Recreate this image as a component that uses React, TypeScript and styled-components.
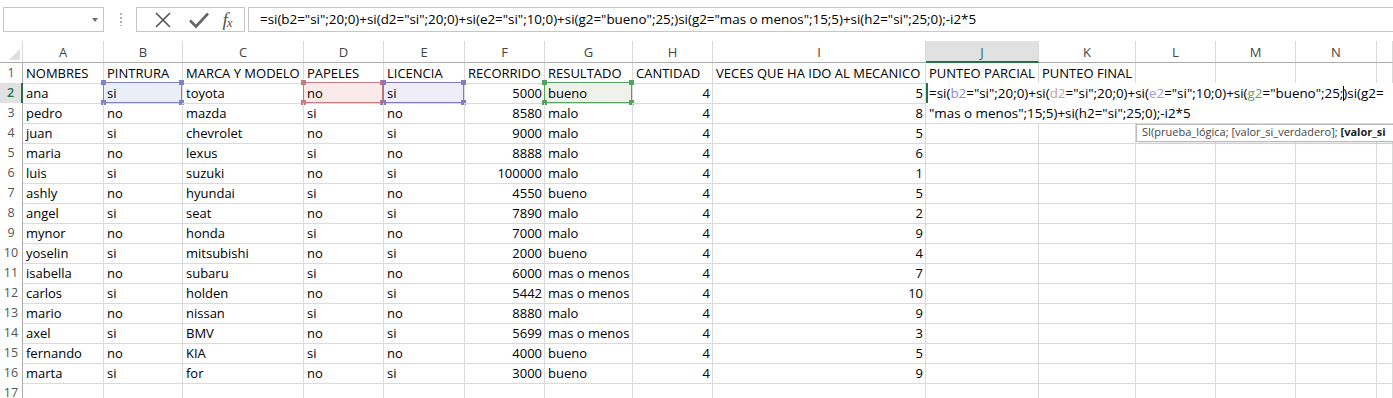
import React from 'react';
import styled, { createGlobalStyle } from 'styled-components';

const GlobalStyle = createGlobalStyle`
  html, body {
    margin: 0;
    padding: 0;
    background: #ffffff;
  }
  body {
    font-family: "Open Sans", "Liberation Sans", sans-serif;
    overflow: hidden;
  }
`;

// Column widths: row header, A..N, then the sliver of O
const COL_WIDTHS = [23, 81, 79, 121, 80, 81, 80, 88, 80, 213, 113, 97, 80, 80, 81];
const COLS = COL_WIDTHS.map(w => `${w}px`).join(' ') + ' 1fr';
const LETTERS = ['A', 'B', 'C', 'D', 'E', 'F', 'G', 'H', 'I', 'J', 'K', 'L', 'M', 'N', ''];
const NUMERIC_COLS = [5, 7, 8]; // F, H, I

const HEADERS = [
  'NOMBRES', 'PINTRURA', 'MARCA Y MODELO', 'PAPELES', 'LICENCIA', 'RECORRIDO',
  'RESULTADO', 'CANTIDAD', 'VECES QUE HA IDO AL MECANICO', 'PUNTEO PARCIAL', 'PUNTEO FINAL',
];

const DATA: (string | number)[][] = [
  ['ana', 'si', 'toyota', 'no', 'si', 5000, 'bueno', 4, 5],
  ['pedro', 'no', 'mazda', 'si', 'no', 8580, 'malo', 4, 8],
  ['juan', 'si', 'chevrolet', 'no', 'si', 9000, 'malo', 4, 5],
  ['maria', 'no', 'lexus', 'si', 'no', 8888, 'malo', 4, 6],
  ['luis', 'si', 'suzuki', 'no', 'si', 100000, 'malo', 4, 1],
  ['ashly', 'no', 'hyundai', 'si', 'no', 4550, 'bueno', 4, 5],
  ['angel', 'si', 'seat', 'no', 'si', 7890, 'malo', 4, 2],
  ['mynor', 'no', 'honda', 'si', 'no', 7000, 'malo', 4, 9],
  ['yoselin', 'si', 'mitsubishi', 'no', 'si', 2000, 'bueno', 4, 4],
  ['isabella', 'no', 'subaru', 'si', 'no', 6000, 'mas o menos', 4, 7],
  ['carlos', 'si', 'holden', 'no', 'si', 5442, 'mas o menos', 4, 10],
  ['mario', 'no', 'nissan', 'si', 'no', 8880, 'malo', 4, 9],
  ['axel', 'si', 'BMV', 'no', 'si', 5699, 'mas o menos', 4, 3],
  ['fernando', 'no', 'KIA', 'si', 'no', 4000, 'bueno', 4, 5],
  ['marta', 'si', 'for', 'no', 'si', 3000, 'bueno', 4, 9],
];

interface RefColor {
  line: string;
  fill: string;
  text: string;
}

const REFS: Record<number, RefColor> = {
  1: { line: '#7d84c6', fill: '#e9eef9', text: '#8a8ccc' },
  3: { line: '#c77b7e', fill: '#fbeaea', text: '#d09a9c' },
  4: { line: '#8779be', fill: '#efedf7', text: '#a49bd0' },
  6: { line: '#56a061', fill: '#eef2ea', text: '#5fa468' },
};

const GREEN = '#217346';
const GRID = '#dadada';

// ---------- Formula bar ----------
const Toolbar = styled.div`
  height: 41px;
  display: flex;
  align-items: flex-start;
  padding-top: 7px;
  box-sizing: border-box;
`;

const NameBox = styled.div`
  margin-left: 3px;
  width: 101px;
  height: 25px;
  border: 1px solid #c6c6c6;
  box-sizing: border-box;
  display: flex;
  justify-content: flex-end;
  align-items: center;
  padding-right: 5px;
`;

const Caret = styled.div`
  width: 0;
  height: 0;
  border-left: 3.5px solid transparent;
  border-right: 3.5px solid transparent;
  border-top: 4px solid #6d6d6d;
`;

const Grip = styled.div`
  margin: 6px 0 0 16px;
  width: 2px;
  height: 13px;
  background: repeating-linear-gradient(to bottom, #b3b3b3 0 2px, transparent 2px 4px);
`;

const ButtonBox = styled.div`
  margin-left: 14px;
  width: 109px;
  height: 25px;
  border: 1px solid #c6c6c6;
  box-sizing: border-box;
  display: flex;
  align-items: center;
  padding-left: 8px;
`;

const IconSlot = styled.div<{ $w: number }>`
  width: ${p => p.$w}px;
  height: 23px;
  display: flex;
  align-items: center;
  justify-content: center;
`;

const Fx = styled.span`
  font-family: "Liberation Serif", "DejaVu Serif", serif;
  font-style: italic;
  font-size: 19px;
  color: #555;
  line-height: 1;
  letter-spacing: -1px;

  sub {
    font-size: 13px;
    vertical-align: -1px;
  }
`;

const FormulaBox = styled.div`
  margin-left: 3px;
  flex: 1;
  height: 25px;
  border: 1px solid #c6c6c6;
  border-right: none;
  box-sizing: border-box;
  padding-left: 11px;
  font-size: 13.4px;
  line-height: 22px;
  color: #000;
  white-space: nowrap;
  overflow: hidden;
`;

// ---------- Sheet ----------
const Sheet = styled.div`
  position: relative;
`;

const Row = styled.div<{ $h: number }>`
  display: grid;
  grid-template-columns: ${COLS};
  height: ${p => p.$h}px;
`;

const Corner = styled.div`
  position: relative;
  border-right: 1px solid ${GRID};
  border-bottom: 1px solid #ababab;
  box-sizing: border-box;

  &::after {
    content: '';
    position: absolute;
    right: 2px;
    bottom: 2px;
    width: 0;
    height: 0;
    border-left: 11px solid transparent;
    border-bottom: 11px solid #dfdfdf;
  }
`;

const ColHead = styled.div<{ $active?: boolean }>`
  border-right: 1px solid ${GRID};
  border-bottom: ${p => (p.$active ? `2px solid ${GREEN}` : '1px solid #ababab')};
  background: ${p => (p.$active ? '#e1e1e1' : '#ffffff')};
  color: ${p => (p.$active ? GREEN : '#444')};
  box-sizing: border-box;
  font-size: 13px;
  line-height: 22px;
  text-align: center;
  overflow: hidden;
`;

const RowHead = styled.div<{ $active?: boolean }>`
  border-bottom: 1px solid ${GRID};
  border-right: ${p => (p.$active ? `2px solid ${GREEN}` : '1px solid #ababab')};
  background: ${p => (p.$active ? '#e1e1e1' : '#ffffff')};
  color: ${p => (p.$active ? GREEN : '#555')};
  font-weight: ${p => (p.$active ? 600 : 400)};
  box-sizing: border-box;
  font-size: 12.5px;
  line-height: 20px;
  text-align: center;
`;

const Cell = styled.div<{ $right?: boolean; $fill?: string }>`
  position: relative;
  border-right: 1px solid ${GRID};
  border-bottom: 1px solid ${GRID};
  background: ${p => p.$fill ?? 'transparent'};
  box-sizing: border-box;
  font-size: 13px;
  line-height: 20px;
  color: #000;
  text-align: ${p => (p.$right ? 'right' : 'left')};
  padding: 0 ${p => (p.$right ? 2 : 0)}px 0 ${p => (p.$right ? 0 : 3)}px;
  white-space: nowrap;
  overflow: visible;
  z-index: 0;
`;

const RangeMark = styled.div<{ $line: string }>`
  position: absolute;
  left: -1px;
  top: -1px;
  right: 0;
  bottom: 0;
  border: 1.5px solid ${p => p.$line};
  pointer-events: none;
  z-index: 2;
`;

const Handle = styled.span<{ $line: string; $x: 'l' | 'r'; $y: 't' | 'b' }>`
  position: absolute;
  width: 5px;
  height: 5px;
  background: ${p => p.$line};
  ${p => (p.$x === 'l' ? 'left: -3px;' : 'right: -3px;')}
  ${p => (p.$y === 't' ? 'top: -3px;' : 'bottom: -3px;')}
`;

// ---------- In-cell editor & tooltip ----------
const Editor = styled.div`
  position: absolute;
  left: 926px;
  top: 42px;
  right: 0;
  height: 40px;
  background: #ffffff;
  z-index: 5;
  font-size: 13.4px;
  line-height: 20px;
  color: #000;
  white-space: nowrap;
  overflow: hidden;
`;

const EditLine = styled.div<{ $active?: boolean }>`
  height: 20px;
  box-sizing: border-box;
  padding-left: 1px;
  border-left: 2px solid ${p => (p.$active ? GREEN : 'transparent')};
`;

const Ref = styled.span<{ $color: string }>`
  color: ${p => p.$color};
`;

const TextCaret = styled.span`
  display: inline-block;
  width: 1px;
  height: 15px;
  background: #000;
  vertical-align: -3px;
  margin-right: -1px;
`;

const Tooltip = styled.div`
  position: absolute;
  left: 1136px;
  top: 83px;
  right: -4px;
  height: 16px;
  background: #ffffff;
  border: 1px solid #bdbdbd;
  box-shadow: 1px 1px 2px rgba(0, 0, 0, 0.12);
  z-index: 6;
  font-size: 11px;
  line-height: 14px;
  color: #444;
  padding-left: 5px;
  white-space: nowrap;
  overflow: hidden;

  b {
    color: #222;
    font-weight: 700;
  }
`;

const FORMULA =
  '=si(b2="si";20;0)+si(d2="si";20;0)+si(e2="si";10;0)+si(g2="bueno";25;)si(g2="mas o menos";15;5)+si(h2="si";25;0);-i2*5';

const CloseIcon = () => (
  <svg width="20" height="20" viewBox="0 0 20 20">
    <path d="M3 3 L17 17 M17 3 L3 17" stroke="#555" strokeWidth="1.6" fill="none" />
  </svg>
);

const CheckIcon = () => (
  <svg width="22" height="20" viewBox="0 0 22 20">
    <path d="M2 10.5 L8 16.5 L20 3.5" stroke="#666" strokeWidth="2.6" fill="none" strokeLinejoin="miter" />
  </svg>
);

const App: React.FC = () => {
  const renderCell = (value: string | number | undefined, col: number, rowIdx: number) => {
    const ref = rowIdx === 2 ? REFS[col] : undefined;
    const right = typeof value === 'number' && NUMERIC_COLS.includes(col);
    return (
      <Cell key={col} $right={right} $fill={ref?.fill}>
        {value}
        {ref && (
          <RangeMark $line={ref.line}>
            <Handle $line={ref.line} $x="l" $y="t" />
            <Handle $line={ref.line} $x="r" $y="t" />
            <Handle $line={ref.line} $x="l" $y="b" />
            <Handle $line={ref.line} $x="r" $y="b" />
          </RangeMark>
        )}
      </Cell>
    );
  };

  const rows: (string | number)[][] = [HEADERS, ...DATA, []];

  return (
    <>
      <GlobalStyle />
      <Toolbar>
        <NameBox>
          <Caret />
        </NameBox>
        <Grip />
        <ButtonBox>
          <IconSlot $w={36}>
            <CloseIcon />
          </IconSlot>
          <IconSlot $w={35}>
            <CheckIcon />
          </IconSlot>
          <IconSlot $w={22}>
            <Fx>
              f<sub>x</sub>
            </Fx>
          </IconSlot>
        </ButtonBox>
        <FormulaBox>{FORMULA}</FormulaBox>
      </Toolbar>

      <Sheet>
        <Row $h={22}>
          <Corner />
          {LETTERS.map((l, i) => (
            <ColHead key={i} $active={l === 'J'}>
              {l}
            </ColHead>
          ))}
        </Row>
        {rows.map((r, idx) => {
          const rowNum = idx + 1;
          return (
            <Row $h={20} key={rowNum}>
              <RowHead $active={rowNum === 2}>{rowNum}</RowHead>
              {LETTERS.map((_, c) => renderCell(r[c], c, rowNum))}
            </Row>
          );
        })}

        <Editor>
          <EditLine $active>
            =si(<Ref $color={REFS[1].text}>b2</Ref>="si";20;0)+si(<Ref $color={REFS[3].text}>d2</Ref>
            ="si";20;0)+si(<Ref $color={REFS[4].text}>e2</Ref>="si";10;0)+si(
            <Ref $color={REFS[6].text}>g2</Ref>="bueno";25;<TextCaret />)si(g2=
          </EditLine>
          <EditLine>"mas o menos";15;5)+si(h2="si";25;0);-i2*5</EditLine>
        </Editor>

        <Tooltip>
          SI(prueba_lógica; [valor_si_verdadero]; <b>[valor_si</b>
        </Tooltip>
      </Sheet>
    </>
  );
};

export default App;
